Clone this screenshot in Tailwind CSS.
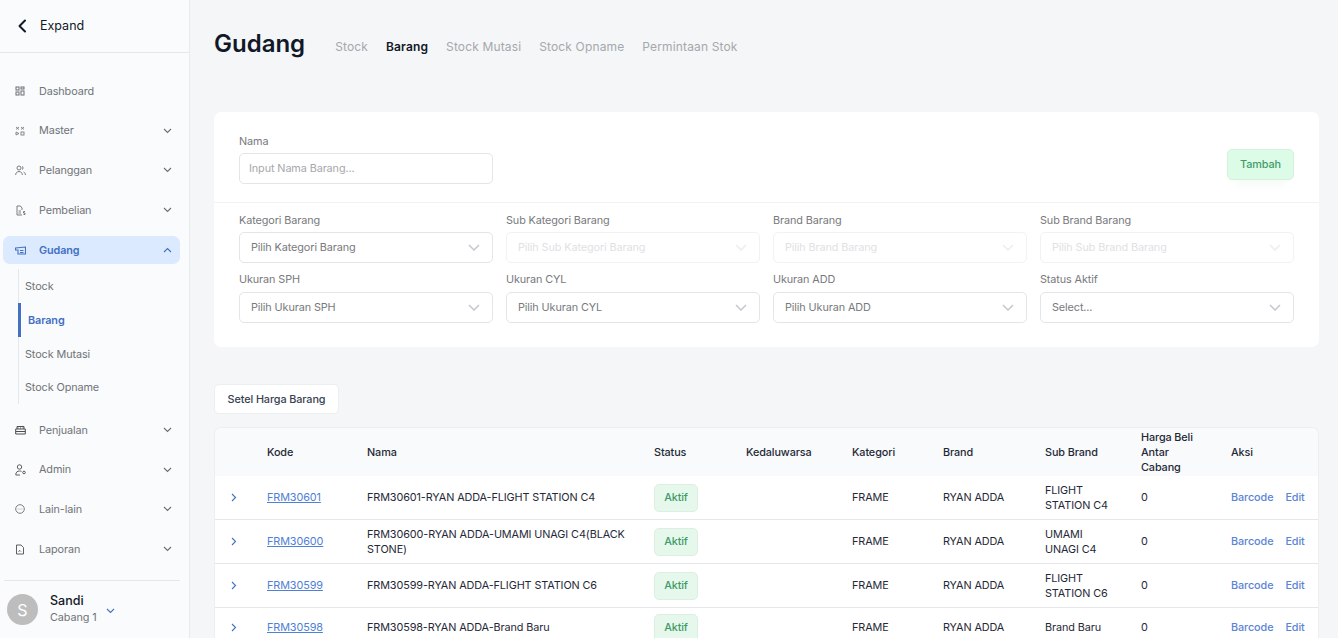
<!DOCTYPE html>
<html lang="id">
<head>
    <meta charset="UTF-8">
    <meta name="viewport" content="width=device-width, initial-scale=1.0">
    <title>Gudang - Barang</title>
    <script src="https://cdn.jsdelivr.net/npm/@tailwindcss/browser@4"></script>
</head>
<body class="font-[family-name:Inter,sans-serif] bg-[#f4f6f8] text-[#111827] h-[638px] overflow-hidden flex">

    <!-- sidebar -->
    <aside class="w-[190px] h-[638px] shrink-0 bg-[#fafbfc] border-r border-[#e8eaed] flex flex-col">
        <div class="h-[53px] shrink-0 border-b border-[#e5e7eb] flex items-center pl-[17px] gap-[13px]">
            <svg class="w-[10px] h-[14px]" viewBox="0 0 10 14" fill="none" stroke="#111827" stroke-width="2" stroke-linecap="round" stroke-linejoin="round"><path d="M8 1.500 2.500 7 8 12.500"/></svg>
            <span class="text-[12.500px] text-[#111827]">Expand</span>
        </div>

        <nav class="flex-1 pt-[24px] flex flex-col gap-3 text-[10.850px] tracking-[-.01em] text-[#707378]">
            <div class="h-[27.750px] flex items-center">
                <svg class="w-[10px] h-[10px] ml-[15px] mr-[14px]" viewBox="0 0 10 10" fill="none" stroke="#6b6e73"><rect x="1" y="1" width="3" height="3"/><rect x="6" y="1" width="3" height="2"/><rect x="1" y="6" width="3" height="3"/><rect x="6" y="5" width="3" height="4"/></svg>
                <span>Dashboard</span>
            </div>
            <div class="h-[27.750px] flex items-center">
                <svg class="w-[10px] h-[10px] ml-[15px] mr-[14px]" viewBox="0 0 10 10" fill="none" stroke="#6b6e73" stroke-width=".8"><path d="M1 1l3 2.500M4 1 1 3.500"/><path d="M6 1l3 2.500M9 1 6 3.500"/><path d="M1 6v3l3-1.500z"/><rect x="6" y="6" width="3" height="3"/></svg>
                <span>Master</span>
                <svg class="w-[9px] h-[6px] ml-auto mr-[17px]" viewBox="0 0 9 6" fill="none" stroke="#6b6e73" stroke-width="1.100"><path d="M1 1l3.500 3.500L8 1"/></svg>
            </div>
            <div class="h-[27.750px] flex items-center">
                <svg class="w-[11px] h-[11px] ml-[15px] mr-[13px]" viewBox="0 0 11 11" fill="none" stroke="#6b6e73" stroke-width=".9"><circle cx="4" cy="3" r="2"/><path d="M.7 10c0-2.400 1.400-3.400 3.300-3.400S7.300 7.600 7.300 10"/><path d="M7 1.200a2 2 0 0 1 0 3.500M8.600 7c1.200.5 1.800 1.500 1.800 3"/></svg>
                <span>Pelanggan</span>
                <svg class="w-[9px] h-[6px] ml-auto mr-[17px]" viewBox="0 0 9 6" fill="none" stroke="#6b6e73" stroke-width="1.100"><path d="M1 1l3.500 3.500L8 1"/></svg>
            </div>
            <div class="h-[27.750px] flex items-center">
                <svg class="w-[11px] h-[11px] ml-[15px] mr-[13px]" viewBox="0 0 11 11" fill="none" stroke="#6b6e73" stroke-width=".9"><path d="M7 10H2V1h3.500L7 3v2"/><path d="M3.500 6H6M3.500 8H6"/><path d="M10 6.500H8.500v1.500H10v1.500H8.500"/></svg>
                <span>Pembelian</span>
                <svg class="w-[9px] h-[6px] ml-auto mr-[17px]" viewBox="0 0 9 6" fill="none" stroke="#6b6e73" stroke-width="1.100"><path d="M1 1l3.500 3.500L8 1"/></svg>
            </div>

            <div>
                <div class="h-[28px] ml-[3px] mr-[9px] rounded-[7px] bg-[#dbeafe] flex items-center text-[#4470c4] font-semibold">
                    <svg class="w-[11px] h-[9px] ml-[12px] mr-[13px]" viewBox="0 0 11 9" fill="none" stroke="#4470c4" stroke-width="1.100"><path d="M.5 2 10.500 1v7H3V4H.5z"/><path d="M5 4.500h3.500M5 6.500h3.500"/></svg>
                    <span>Gudang</span>
                    <svg class="w-[9px] h-[6px] ml-auto mr-[8px]" viewBox="0 0 9 6" fill="none" stroke="#4470c4" stroke-width="1.100"><path d="M1 5l3.500-3.500L8 5"/></svg>
                </div>
                <div class="mt-[5px] ml-[18px] border-l border-[#e5e7eb] flex flex-col">
                    <div class="h-[34px] flex items-center pl-[6px]">Stock</div>
                    <div class="h-[34px] flex items-center pl-[7px] -ml-px border-l-[3px] border-[#4470c4] text-[#4470c4] font-semibold">Barang</div>
                    <div class="h-[34px] flex items-center pl-[6px]">Stock Mutasi</div>
                    <div class="h-[33px] flex items-center pl-[6px]">Stock Opname</div>
                </div>
            </div>

            <div class="h-[27.750px] flex items-center">
                <svg class="w-[11px] h-[10px] ml-[15px] mr-[13px]" viewBox="0 0 11 10" fill="none" stroke="#4b4e53"><path d="M2 4V1.500h7V4"/><path d="M.7 4h9.600v5H.7z"/><path d="M.7 6.500h9.600M3 2.500v1M5.500 2.500v1M8 2.500v1"/></svg>
                <span>Penjualan</span>
                <svg class="w-[9px] h-[6px] ml-auto mr-[17px]" viewBox="0 0 9 6" fill="none" stroke="#6b6e73" stroke-width="1.100"><path d="M1 1l3.500 3.500L8 1"/></svg>
            </div>
            <div class="h-[27.750px] flex items-center">
                <svg class="w-[12px] h-[12px] ml-[15px] mr-[12px]" viewBox="0 0 12 12" fill="none" stroke="#4b4e53" stroke-width=".9"><circle cx="4.500" cy="3" r="2.200"/><path d="M.8 11c0-3 1.500-4 3.700-4 .8 0 1.400.1 2 .4M.8 11H5"/><circle cx="9" cy="8.500" r="1.300"/></svg>
                <span>Admin</span>
                <svg class="w-[9px] h-[6px] ml-auto mr-[17px]" viewBox="0 0 9 6" fill="none" stroke="#6b6e73" stroke-width="1.100"><path d="M1 1l3.500 3.500L8 1"/></svg>
            </div>
            <div class="h-[27.750px] flex items-center">
                <svg class="w-[10px] h-[10px] ml-[15px] mr-[14px]" viewBox="0 0 10 10" fill="none" stroke="#6b6e73" stroke-width=".9"><circle cx="5" cy="5" r="4.300"/><path d="M2.800 5h.6M4.700 5h.6M6.600 5h.6"/></svg>
                <span>Lain-lain</span>
                <svg class="w-[9px] h-[6px] ml-auto mr-[17px]" viewBox="0 0 9 6" fill="none" stroke="#6b6e73" stroke-width="1.100"><path d="M1 1l3.500 3.500L8 1"/></svg>
            </div>
            <div class="h-[27.750px] flex items-center">
                <svg class="w-[10px] h-[11px] ml-[15px] mr-[14px]" viewBox="0 0 10 11" fill="none" stroke="#4b4e53" stroke-width=".9"><path d="M1.500 1h4.500l2.500 2.500V10h-7z"/><path d="M3.500 7.500 5 6.500l1 1"/></svg>
                <span>Laporan</span>
                <svg class="w-[9px] h-[6px] ml-auto mr-[17px]" viewBox="0 0 9 6" fill="none" stroke="#6b6e73" stroke-width="1.100"><path d="M1 1l3.500 3.500L8 1"/></svg>
            </div>
        </nav>

        <div class="h-[58px] shrink-0 ml-[4px] mr-[9px] border-t border-[#e5e7eb] flex items-center pl-[3px]">
            <div class="w-[31px] h-[31px] rounded-full bg-[#bdbdbd] text-white text-[16px] flex items-center justify-center">S</div>
            <div class="ml-[12px] mb-[4px]">
                <div class="text-[12.500px] leading-[18px] font-medium text-[#111827]">Sandi</div>
                <div class="text-[10.850px] tracking-[-.01em] leading-[14px] text-[#707378]">Cabang 1</div>
            </div>
            <svg class="w-[9px] h-[6px] ml-[9px] mt-[2px]" viewBox="0 0 9 6" fill="none" stroke="#4470c4" stroke-width="1.100"><path d="M1 1l3.500 3.500L8 1"/></svg>
        </div>
    </aside>

    <!-- main -->
    <main class="flex-1 min-w-0 pl-[24px] pr-[19px]">
        <div class="h-[112px] pt-[27px] flex items-start">
            <h1 class="text-[24px] leading-[32px] font-semibold text-[#111827] mr-[30px] translate-y-[1px]">Gudang</h1>
            <div class="flex gap-[18px] text-[12px] leading-[20px] mt-[10px] text-[#a6a8ac] tracking-[.012em]">
                <span>Stock</span>
                <span class="text-[#111827] font-semibold">Barang</span>
                <span>Stock Mutasi</span>
                <span>Stock Opname</span>
                <span>Permintaan Stok</span>
            </div>
        </div>

        <!-- filter -->
        <section class="w-[1105px] h-[235px] bg-white rounded-[7px] text-[10.850px] tracking-[-.01em] text-[#77797d]">
            <div class="h-[91px] border-b border-[#f1f2f4] pl-[25px] pr-[25px] flex">
                <div class="w-[254px] pt-[22px]">
                    <div class="leading-[14px] mb-[5px]">Nama</div>
                    <div class="h-[31px] rounded-[5px] border border-[#e3e5e8] flex items-center pl-[9px] text-[#a6a8ac]">Input Nama Barang...</div>
                </div>
                <div class="ml-auto pt-[37px]">
                    <button class="w-[67px] h-[31px] rounded-[5px] bg-[#dcfce7] border border-[#d6f0df] text-[#3f9b68] font-medium shadow-[0_14px_10px_-8px_#f5fbf7]">Tambah</button>
                </div>
            </div>
            <div class="pl-[25px] pr-[25px] pt-[10px] grid grid-cols-4 gap-x-[13px]">
                <div>
                    <div class="h-[14px] leading-[14px] mb-[5px]">Kategori Barang</div>
                    <div class="h-[31px] rounded-[5px] border border-[#e3e5e8] flex items-center pl-[11px] pr-[12px]">
                        <span>Pilih Kategori Barang</span>
                        <svg class="w-[12px] h-[7px] ml-auto" viewBox="0 0 12 7" fill="none" stroke="#c4c7cc" stroke-width="1.500"><path d="M1 1l5 5 5-5"/></svg>
                    </div>
                </div>
                <div>
                    <div class="h-[14px] leading-[14px] mb-[5px]">Sub Kategori Barang</div>
                    <div class="h-[31px] rounded-[5px] border border-[#f1f2f4] flex items-center pl-[11px] pr-[12px] text-[#dfe1e4]">
                        <span>Pilih Sub Kategori Barang</span>
                        <svg class="w-[12px] h-[7px] ml-auto" viewBox="0 0 12 7" fill="none" stroke="#ebedef" stroke-width="1.500"><path d="M1 1l5 5 5-5"/></svg>
                    </div>
                </div>
                <div>
                    <div class="h-[14px] leading-[14px] mb-[5px]">Brand Barang</div>
                    <div class="h-[31px] rounded-[5px] border border-[#f1f2f4] flex items-center pl-[11px] pr-[12px] text-[#dfe1e4]">
                        <span>Pilih Brand Barang</span>
                        <svg class="w-[12px] h-[7px] ml-auto" viewBox="0 0 12 7" fill="none" stroke="#ebedef" stroke-width="1.500"><path d="M1 1l5 5 5-5"/></svg>
                    </div>
                </div>
                <div>
                    <div class="h-[14px] leading-[14px] mb-[5px]">Sub Brand Barang</div>
                    <div class="h-[31px] rounded-[5px] border border-[#f1f2f4] flex items-center pl-[11px] pr-[12px] text-[#dfe1e4]">
                        <span>Pilih Sub Brand Barang</span>
                        <svg class="w-[12px] h-[7px] ml-auto" viewBox="0 0 12 7" fill="none" stroke="#ebedef" stroke-width="1.500"><path d="M1 1l5 5 5-5"/></svg>
                    </div>
                </div>
                <div class="mt-[9px]">
                    <div class="h-[14px] leading-[14px] mb-[6px]">Ukuran SPH</div>
                    <div class="h-[31px] rounded-[5px] border border-[#e3e5e8] flex items-center pl-[11px] pr-[12px]">
                        <span>Pilih Ukuran SPH</span>
                        <svg class="w-[12px] h-[7px] ml-auto" viewBox="0 0 12 7" fill="none" stroke="#c4c7cc" stroke-width="1.500"><path d="M1 1l5 5 5-5"/></svg>
                    </div>
                </div>
                <div class="mt-[9px]">
                    <div class="h-[14px] leading-[14px] mb-[6px]">Ukuran CYL</div>
                    <div class="h-[31px] rounded-[5px] border border-[#e3e5e8] flex items-center pl-[11px] pr-[12px]">
                        <span>Pilih Ukuran CYL</span>
                        <svg class="w-[12px] h-[7px] ml-auto" viewBox="0 0 12 7" fill="none" stroke="#c4c7cc" stroke-width="1.500"><path d="M1 1l5 5 5-5"/></svg>
                    </div>
                </div>
                <div class="mt-[9px]">
                    <div class="h-[14px] leading-[14px] mb-[6px]">Ukuran ADD</div>
                    <div class="h-[31px] rounded-[5px] border border-[#e3e5e8] flex items-center pl-[11px] pr-[12px]">
                        <span>Pilih Ukuran ADD</span>
                        <svg class="w-[12px] h-[7px] ml-auto" viewBox="0 0 12 7" fill="none" stroke="#c4c7cc" stroke-width="1.500"><path d="M1 1l5 5 5-5"/></svg>
                    </div>
                </div>
                <div class="mt-[9px]">
                    <div class="h-[14px] leading-[14px] mb-[6px]">Status Aktif</div>
                    <div class="h-[31px] rounded-[5px] border border-[#e3e5e8] flex items-center pl-[11px] pr-[12px]">
                        <span>Select...</span>
                        <svg class="w-[12px] h-[7px] ml-auto" viewBox="0 0 12 7" fill="none" stroke="#c4c7cc" stroke-width="1.500"><path d="M1 1l5 5 5-5"/></svg>
                    </div>
                </div>
            </div>
        </section>

        <button class="block mt-[37px] h-[30px] w-[125px] bg-white rounded-[5px] border border-[#eceef0] text-[10.850px] tracking-[-.01em] font-medium text-[#374151]">Setel Harga Barang</button>

        <!-- table -->
        <div class="mt-[13px] w-[1105px] bg-white rounded-t-[7px] border border-[#eceef0] border-b-0 overflow-hidden">
            <table class="w-full table-fixed border-collapse text-[10.850px] tracking-[-.01em] leading-[15px] text-[#1f2937]">
                <colgroup>
                    <col class="w-[40px]"><col class="w-[100px]"><col class="w-[287px]"><col class="w-[92px]"><col class="w-[106px]"><col class="w-[91px]"><col class="w-[102px]"><col class="w-[96px]"><col class="w-[90px]"><col>
                </colgroup>
                <thead class="bg-[#f8fafb] text-left">
                    <tr class="h-[48px]">
                        <th class="font-medium px-3"></th>
                        <th class="font-medium px-3">Kode</th>
                        <th class="font-medium px-3">Nama</th>
                        <th class="font-medium px-3">Status</th>
                        <th class="font-medium px-3">Kedaluwarsa</th>
                        <th class="font-medium px-3">Kategori</th>
                        <th class="font-medium px-3">Brand</th>
                        <th class="font-medium px-3">Sub Brand</th>
                        <th class="font-medium px-3">Harga Beli Antar Cabang</th>
                        <th class="font-medium px-3">Aksi</th>
                    </tr>
                </thead>
                <tbody>
                    <tr class="h-[43px] border-b border-[#e5e7eb]">
                        <td class="pl-[16px]"><svg class="w-[6px] h-[9px]" viewBox="0 0 6 9" fill="none" stroke="#4470c4" stroke-width="1.100"><path d="M1 1l3.500 3.500L1 8"/></svg></td>
                        <td class="px-3"><a class="text-[#4f7fd6] underline">FRM30601</a></td>
                        <td class="px-3">FRM30601-RYAN ADDA-FLIGHT STATION C4</td>
                        <td class="px-3 pt-px"><span class="inline-flex items-center justify-center w-[44px] h-[28px] rounded-[5px] bg-[#e6f8ec] border border-[#dcefe2] text-[#3f9b68] font-medium">Aktif</span></td>
                        <td class="px-3"></td>
                        <td class="px-3">FRAME</td>
                        <td class="px-3">RYAN ADDA</td>
                        <td class="px-3 pt-px">FLIGHT STATION C4</td>
                        <td class="px-3">0</td>
                        <td class="px-3 font-medium text-[#5b84d6]"><div class="flex gap-3"><span>Barcode</span><span>Edit</span></div></td>
                    </tr>
                    <tr class="h-[44px] border-b border-[#e5e7eb]">
                        <td class="pl-[16px]"><svg class="w-[6px] h-[9px]" viewBox="0 0 6 9" fill="none" stroke="#4470c4" stroke-width="1.100"><path d="M1 1l3.500 3.500L1 8"/></svg></td>
                        <td class="px-3"><a class="text-[#4f7fd6] underline">FRM30600</a></td>
                        <td class="px-3 pt-px">FRM30600-RYAN ADDA-UMAMI UNAGI C4(BLACK STONE)</td>
                        <td class="px-3 pt-px"><span class="inline-flex items-center justify-center w-[44px] h-[28px] rounded-[5px] bg-[#e6f8ec] border border-[#dcefe2] text-[#3f9b68] font-medium">Aktif</span></td>
                        <td class="px-3"></td>
                        <td class="px-3">FRAME</td>
                        <td class="px-3">RYAN ADDA</td>
                        <td class="px-3 pt-px">UMAMI UNAGI C4</td>
                        <td class="px-3">0</td>
                        <td class="px-3 font-medium text-[#5b84d6]"><div class="flex gap-3"><span>Barcode</span><span>Edit</span></div></td>
                    </tr>
                    <tr class="h-[44px] border-b border-[#e5e7eb]">
                        <td class="pl-[16px]"><svg class="w-[6px] h-[9px]" viewBox="0 0 6 9" fill="none" stroke="#4470c4" stroke-width="1.100"><path d="M1 1l3.500 3.500L1 8"/></svg></td>
                        <td class="px-3"><a class="text-[#4f7fd6] underline">FRM30599</a></td>
                        <td class="px-3">FRM30599-RYAN ADDA-FLIGHT STATION C6</td>
                        <td class="px-3 pt-px"><span class="inline-flex items-center justify-center w-[44px] h-[28px] rounded-[5px] bg-[#e6f8ec] border border-[#dcefe2] text-[#3f9b68] font-medium">Aktif</span></td>
                        <td class="px-3"></td>
                        <td class="px-3">FRAME</td>
                        <td class="px-3">RYAN ADDA</td>
                        <td class="px-3 pt-px">FLIGHT STATION C6</td>
                        <td class="px-3">0</td>
                        <td class="px-3 font-medium text-[#5b84d6]"><div class="flex gap-3"><span>Barcode</span><span>Edit</span></div></td>
                    </tr>
                    <tr class="h-[41px]">
                        <td class="pl-[16px]"><svg class="w-[6px] h-[9px]" viewBox="0 0 6 9" fill="none" stroke="#4470c4" stroke-width="1.100"><path d="M1 1l3.500 3.500L1 8"/></svg></td>
                        <td class="px-3"><a class="text-[#4f7fd6] underline">FRM30598</a></td>
                        <td class="px-3">FRM30598-RYAN ADDA-Brand Baru</td>
                        <td class="px-3"><span class="inline-flex items-center justify-center w-[44px] h-[28px] rounded-[5px] bg-[#e6f8ec] border border-[#dcefe2] text-[#3f9b68] font-medium">Aktif</span></td>
                        <td class="px-3"></td>
                        <td class="px-3">FRAME</td>
                        <td class="px-3">RYAN ADDA</td>
                        <td class="px-3">Brand Baru</td>
                        <td class="px-3">0</td>
                        <td class="px-3 font-medium text-[#5b84d6]"><div class="flex gap-3"><span>Barcode</span><span>Edit</span></div></td>
                    </tr>
                </tbody>
            </table>
        </div>
    </main>
</body>
</html>
